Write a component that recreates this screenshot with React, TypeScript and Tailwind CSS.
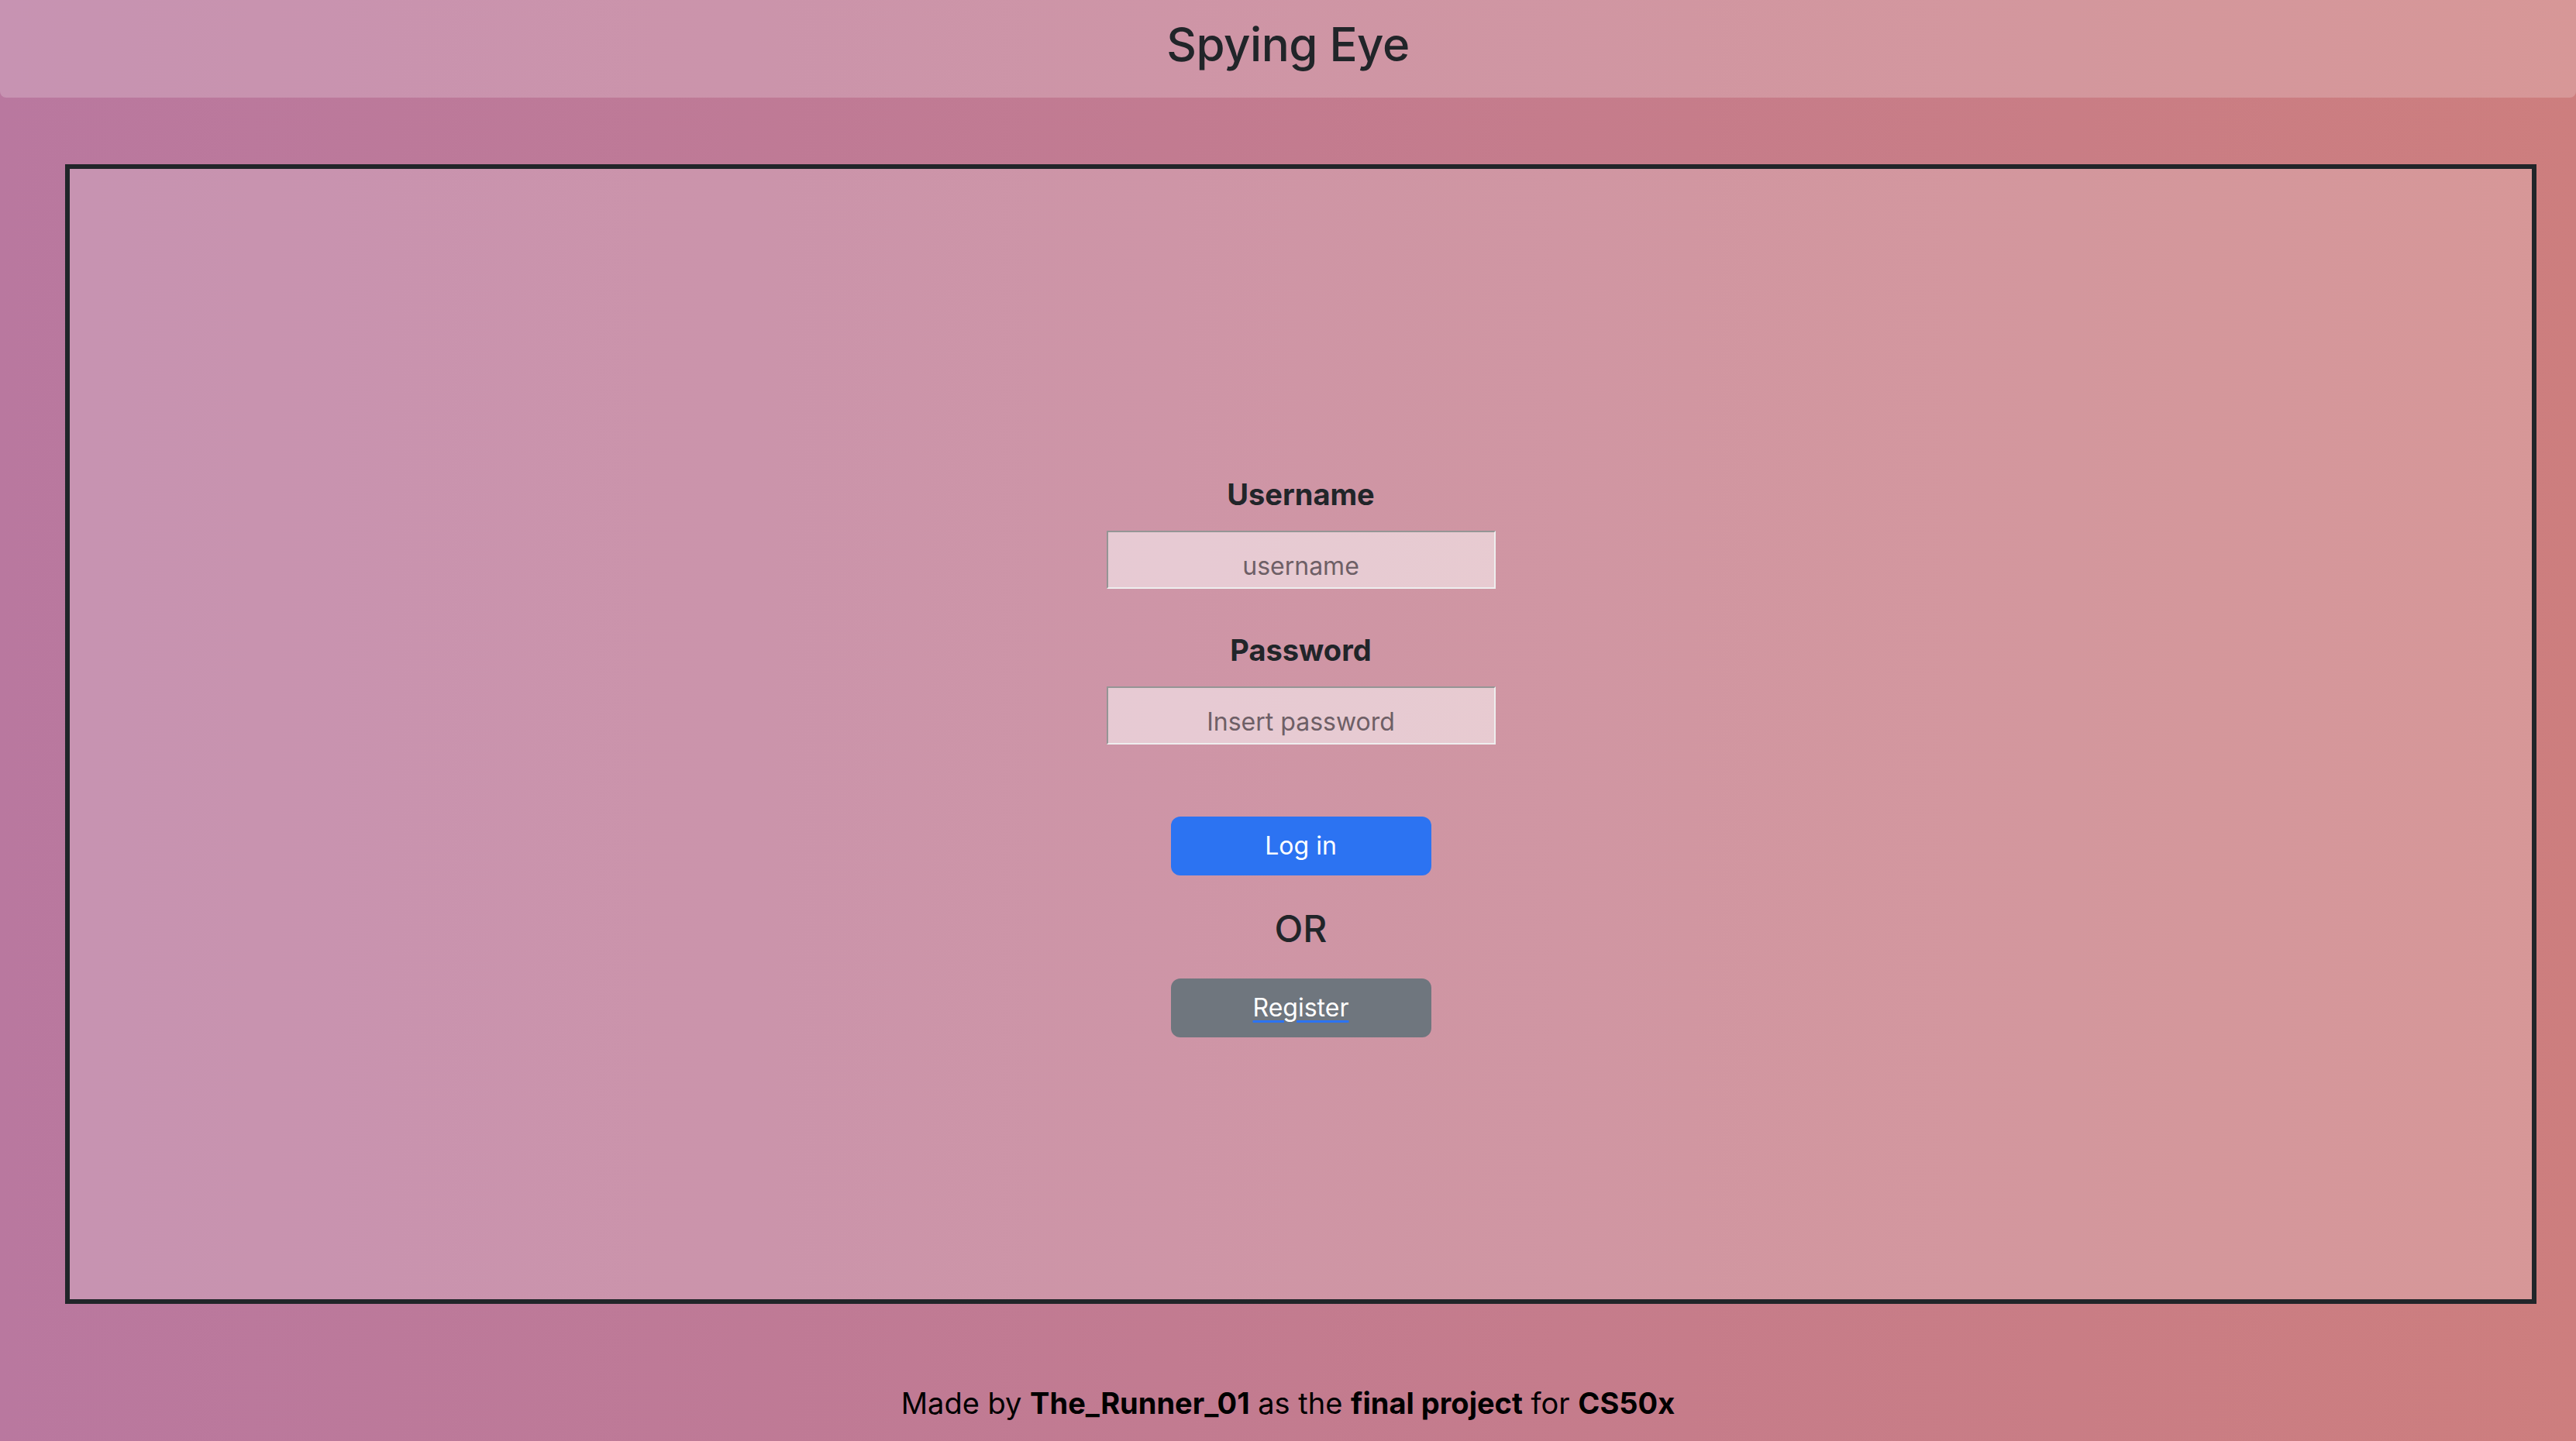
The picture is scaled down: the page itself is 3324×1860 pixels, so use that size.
import React, { useState } from 'react';

const App: React.FC = () => {
  const [username, setUsername] = useState('');
  const [password, setPassword] = useState('');

  return (
    <div className="min-h-screen w-full bg-linear-to-r from-[#b9789f] to-[#cd7e7e] font-['Inter',sans-serif] text-[#212529]">
      {/* Header */}
      <header className="h-[126px] bg-white/20 rounded-b-[8px] flex justify-center pt-[21px]">
        <h1 className="text-[60px] font-medium leading-[1.2] tracking-[-0.5px]">Spying Eye</h1>
      </header>

      {/* Login box */}
      <main className="mt-[86px] ml-[84px] mr-[51px] h-[1471px] border-[6px] border-[#212529] bg-white/20 flex flex-col items-center pt-[397px]">
        <label htmlFor="username" className="text-[38px] font-bold leading-[46px]">
          Username
        </label>
        <input
          id="username"
          type="text"
          value={username}
          onChange={e => setUsername(e.target.value)}
          placeholder="username"
          className="mt-[24px] w-[502px] h-[75px] bg-white/50 border-2 border-t-[#959595] border-l-[#959595] border-b-[#eeeeee] border-r-[#eeeeee] text-center text-[32px] pt-[16px] pb-0 outline-none placeholder:text-[#6e5f66]"
        />

        <label htmlFor="password" className="mt-[56px] text-[38px] font-bold leading-[46px]">
          Password
        </label>
        <input
          id="password"
          type="password"
          value={password}
          onChange={e => setPassword(e.target.value)}
          placeholder="Insert password"
          className="mt-[24px] w-[502px] h-[75px] bg-white/50 border-2 border-t-[#959595] border-l-[#959595] border-b-[#eeeeee] border-r-[#eeeeee] text-center text-[32px] pt-[16px] pb-0 outline-none placeholder:text-[#6e5f66]"
        />

        <button className="mt-[93px] w-[336px] h-[76px] rounded-[12px] bg-[#2c73f2] text-white text-[32px] flex items-center justify-center">
          Log in
        </button>

        <p className="mt-[40px] text-[48px] font-medium leading-[58px]">OR</p>

        <button className="mt-[35px] w-[336px] h-[76px] rounded-[12px] bg-[#6f767e] text-white text-[32px] flex items-center justify-center">
          <span className="underline decoration-[#2c73f2] decoration-[3px] underline-offset-[5px]">Register</span>
        </button>
      </main>

      {/* Footer */}
      <footer className="pt-[105px] pb-[26px] flex justify-center text-[38px] leading-[46px] text-black">
        <p>
          Made by <b className="font-bold">The_Runner_01</b> as the <b className="font-bold">final project</b> for{' '}
          <b className="font-bold">CS50x</b>
        </p>
      </footer>
    </div>
  );
};

export default App;
